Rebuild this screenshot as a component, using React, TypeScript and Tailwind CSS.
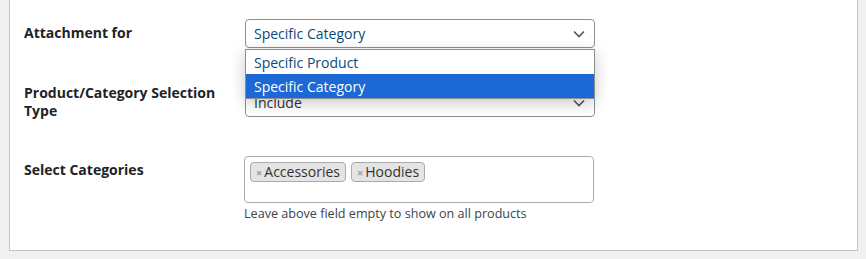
import React from 'react';

const font = { fontFamily: '"Open Sans", "Noto Sans", sans-serif' };

const Chevron: React.FC = () => (
  <svg width="12" height="8" viewBox="0 0 12 8" className="text-[#50575e]">
    <path d="M1 1.5 L6 6.5 L11 1.5" fill="none" stroke="currentColor" strokeWidth="1.6" />
  </svg>
);

const Tag: React.FC<{ label: string }> = ({ label }) => (
  <span className="flex h-[20px] items-center gap-[2px] rounded-[4px] border border-[#aaa] bg-[#e4e4e4] px-[5px] text-[14px] leading-none text-[#333]">
    <span className="text-[11px] font-bold text-[#999]">×</span>
    {label}
  </span>
);

export default function App() {
  return (
    <div className="h-[259px] w-[866px] overflow-hidden bg-[#f0f0f1] pl-[9px]" style={font}>
      <div className="w-[849px] border border-t-0 border-[#c3c4c7] bg-white pl-[14px] pt-[19px] pb-[27px]">
        {/* Attachment for */}
        <div className="flex">
          <div className="w-[221px] pt-[4px] text-[14px] leading-[20px] font-bold text-[#1d2327]">Attachment for</div>
          <div className="relative w-[350px]">
            <div className="flex h-[29px] items-center justify-between rounded-[4px] border border-[#8c8f94] pl-[8px] pr-[9px] text-[14px] text-[#0a4b78]">
              <span>Specific Category</span>
              <Chevron />
            </div>
            <div className="absolute left-0 top-[30px] z-10 w-[350px] border border-[#8c8f94] bg-white text-[14px] shadow-[0_4px_14px_rgba(0,0,0,0.22)]">
              <div className="flex h-[24px] items-center pl-[8px] text-[#0a4b78]">Specific Product</div>
              <div className="flex h-[24px] items-center bg-[#1c68d4] pl-[8px] text-white">Specific Category</div>
            </div>
          </div>
        </div>

        {/* Selection type */}
        <div className="mt-[36px] flex">
          <div className="w-[221px] text-[14px] leading-[18px] font-bold text-[#1d2327]">
            Product/Category Selection Type
          </div>
          <div className="mt-[4px] flex h-[29px] w-[350px] items-center justify-between rounded-[4px] border border-[#8c8f94] pl-[8px] pr-[9px] text-[14px] text-[#2c3338]">
            <span>Include</span>
            <Chevron />
          </div>
        </div>

        {/* Categories */}
        <div className="mt-[36px] flex">
          <div className="w-[220px] pt-[4px] text-[14px] leading-[20px] font-bold text-[#1d2327]">Select Categories</div>
          <div className="w-[350px]">
            <div className="flex h-[47px] items-start gap-[5px] rounded-[4px] border border-[#aaa] px-[5px] pt-[5px]">
              <Tag label="Accessories" />
              <Tag label="Hoodies" />
            </div>
            <p className="mt-[2px] text-[12.6px] leading-[18px] text-[#3c434a]">Leave above field empty to show on all products</p>
          </div>
        </div>
      </div>
    </div>
  );
}
